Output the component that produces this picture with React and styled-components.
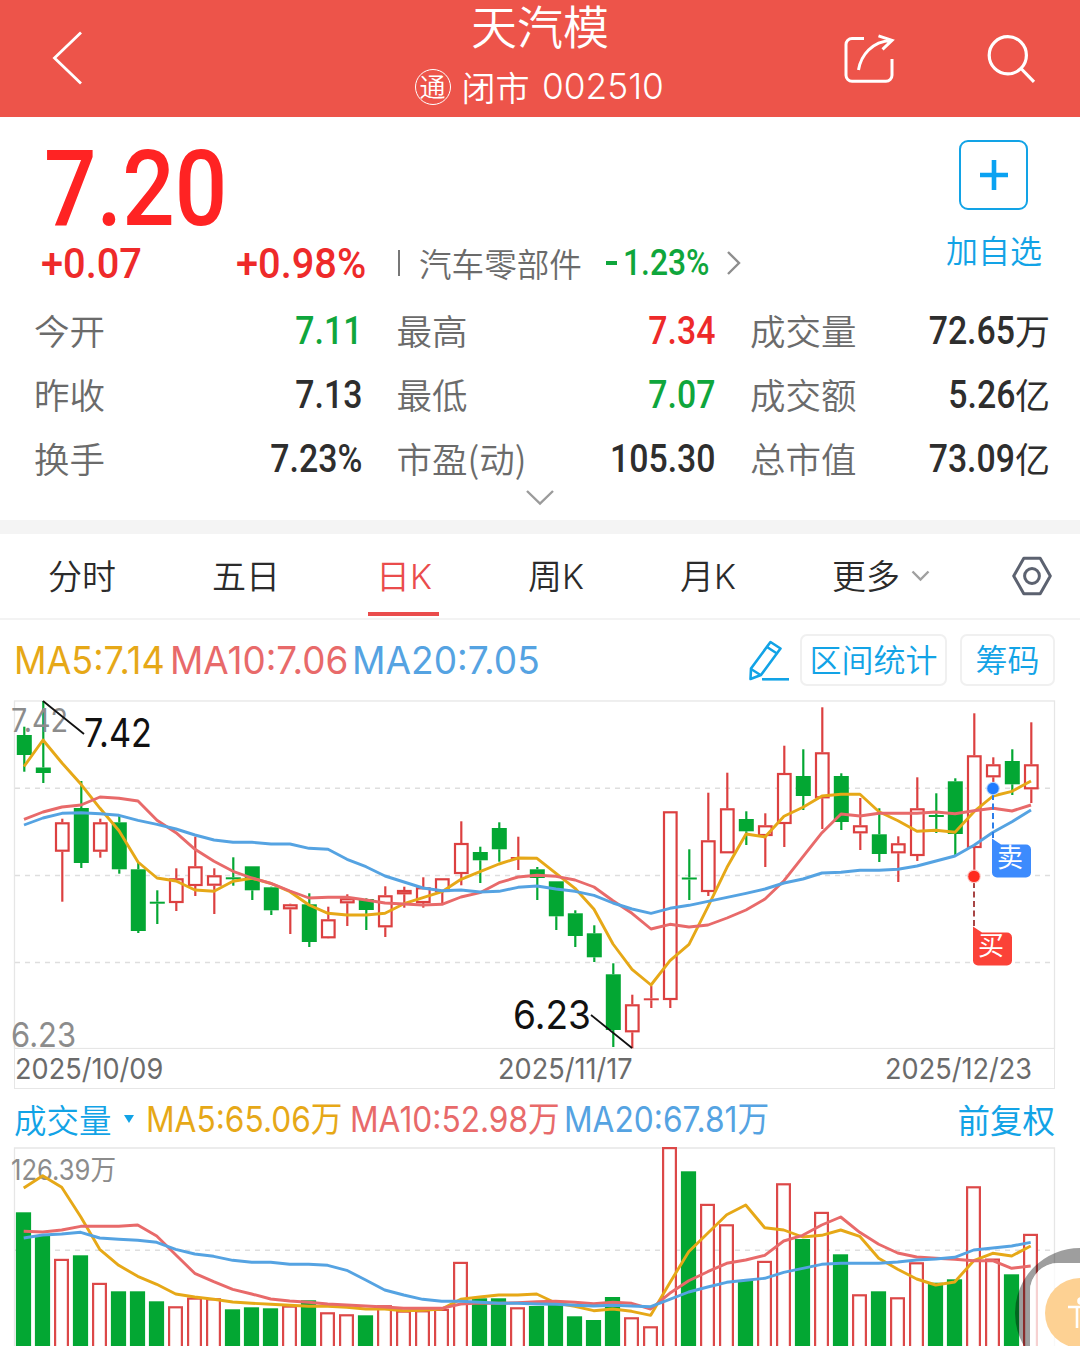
import React from 'react';
import styled, { createGlobalStyle } from 'styled-components';

const LATIN = "Inter, 'Noto Sans CJK SC', sans-serif";
const CJK = "'Noto Sans CJK SC', sans-serif";
const DIGIT = "Roboto, 'Noto Sans CJK SC', sans-serif";

const RED = '#ee2a2a';
const GREEN = '#0fa63c';
const BLUE = '#12a3e6';
const MA_COLORS = ['#e6a817', '#e86a6a', '#55a3e2'];

const STEP = 19;

// [up(1) / down(0), high, bodyTop, bodyBottom, low, volumeTop]
const candles = [
  [0, 726.7, 735, 755, 771.7, 1212.3],
  [0, 701, 767.5, 773, 783, 1235.7],
  [1, 818.7, 822.3, 851.7, 901.7, 1259.3],
  [0, 781, 808, 863, 868, 1255.3],
  [1, 818.7, 822.3, 851.7, 857.7, 1283.3],
  [0, 816, 822.3, 869.3, 873.7, 1291.3],
  [0, 863, 869.3, 931, 933, 1291.3],
  [0, 890.3, 901.7, 903.7, 924, 1301.3],
  [1, 868.3, 878.3, 903, 911, 1306.7],
  [1, 836.7, 866.3, 886, 896, 1298],
  [1, 868.3, 875.3, 885.7, 914, 1298.7],
  [0, 857.3, 877.3, 879.3, 885.7, 1309.3],
  [0, 866.3, 866.3, 890.3, 900, 1307.3],
  [0, 886.7, 887.3, 910.3, 915, 1308.3],
  [1, 903.7, 904.3, 909.3, 934, 1306],
  [0, 893.3, 904.3, 942, 947, 1300.3],
  [1, 906.7, 919.3, 938.3, 938.5, 1312.7],
  [1, 894.3, 898.3, 903.3, 926, 1314.7],
  [0, 898.3, 899, 910, 930, 1315.3],
  [1, 886.3, 895.3, 927.3, 937, 1305.7],
  [1, 886.7, 890, 894.3, 907.7, 1311],
  [1, 877.3, 887.3, 903, 907.7, 1310.7],
  [1, 878.3, 878.3, 892, 904.7, 1309.3],
  [1, 821.3, 843, 874, 885.3, 1262.3],
  [0, 846.7, 852, 860.3, 883, 1298.3],
  [0, 822.3, 828, 849.3, 861.7, 1298.3],
  [1, 836.7, 857, 859, 870, 1307.7],
  [0, 867, 869.3, 878, 900, 1306],
  [0, 881.3, 881.3, 916.3, 930, 1305],
  [0, 910.3, 913.3, 936, 947, 1316.3],
  [0, 925.3, 933.3, 957.3, 962, 1320],
  [0, 963.3, 974.3, 1030, 1047, 1297],
  [1, 994.7, 1004.3, 1032.3, 1048.3, 1317.7],
  [1, 986, 998.3, 1000.3, 1008, 1326.7],
  [1, 811.3, 811.3, 1000, 1008, 1147.5],
  [0, 849.3, 877.5, 879.5, 900, 1171.3],
  [1, 792.7, 840.3, 892, 896, 1204.3],
  [1, 772.7, 808.3, 853.3, 853.3, 1224.7],
  [0, 811.3, 819, 831.3, 845, 1280],
  [1, 813.3, 825.3, 836, 867, 1261.3],
  [1, 745.7, 773, 824, 847, 1183.7],
  [0, 749.3, 776, 796, 810, 1239],
  [1, 707.3, 752.3, 798.3, 829, 1212.3],
  [0, 773.3, 776, 822, 830, 1254.3],
  [1, 798, 825.3, 833.3, 850, 1294.7],
  [0, 808.3, 834.3, 854, 862, 1291.3],
  [1, 836.3, 843.3, 853.3, 882, 1297.7],
  [1, 777.3, 808.3, 856, 861, 1262.7],
  [0, 793.3, 815, 817, 833, 1282.7],
  [0, 778.3, 781.3, 834, 855, 1279.3],
  [1, 713.3, 755.3, 848, 873, 1186.7],
  [1, 757.3, 764.3, 777.3, 785, 1259],
  [0, 749.3, 761, 784.3, 795, 1274.3],
  [1, 722.3, 764.3, 789.3, 803, 1234.3],
];

const priceMA = [
  [766.5, 740, 763, 784.3, 808.3, 830.7, 862, 878, 881, 890, 891.3, 881.3, 878.3, 883.5, 891.7, 905, 913.3, 915,
    915, 913.3, 903.7, 897.7, 891.7, 879.3, 871.7, 864, 858, 858.3, 873.3, 888.3, 909.3, 944, 969.3, 985, 960.7,
    944.3, 906.7, 867.3, 834, 837, 816.3, 807.3, 796, 794.3, 794.3, 811.7, 820.7, 831.3, 830.3, 832.3, 811.7, 796,
    791.3, 781],
  [819.3, 812, 807, 805, 797, 798.3, 801, 820.3, 832.7, 849.3, 861.3, 871.3, 878, 883.3, 891, 898, 897.3, 897.3,
    900, 903, 904, 905, 904.3, 897, 892.7, 882.7, 877, 875.3, 876.3, 880, 887, 900.7, 913.3, 929, 924.3, 927, 925,
    918, 910, 899, 880.7, 856.7, 832.7, 814, 816, 813.3, 813.3, 813.3, 812, 813.7, 810.7, 808.3, 811, 805],
  [825, 818, 813.3, 812.7, 813.7, 815.3, 820.3, 824.3, 829, 835, 840, 842.3, 842.3, 844, 844, 848.3, 849.3, 859.3,
    866.7, 876, 882, 888, 890.7, 890, 892, 891.3, 887.3, 886, 889, 891.3, 895.3, 903, 909, 913.3, 908.3, 905.3,
    901.3, 897.3, 893.3, 889, 883, 879, 873, 872.3, 870.3, 870.3, 869.3, 866, 861, 856, 845.3, 832.3, 821.7, 810],
];

const volumeMA = [
  [1188, 1175.7, 1187.3, 1216.7, 1249.3, 1265.3, 1276.3, 1284.3, 1294, 1297, 1299.3, 1302, 1303.3, 1304.3, 1305.3,
    1306.3, 1306.3, 1307.3, 1309, 1309, 1310.7, 1310.3, 1309, 1299.3, 1297, 1295, 1295, 1294, 1303, 1306.3, 1310.7,
    1309, 1311.3, 1315.3, 1283, 1251.7, 1233.3, 1214.7, 1205, 1227.7, 1230, 1237, 1235.3, 1230, 1236.3, 1258.3,
    1269.3, 1279, 1285, 1282, 1260.7, 1253.3, 1256, 1246],
  [1231.3, 1232, 1230, 1226.3, 1226.3, 1226.3, 1225, 1236, 1254.7, 1273.3, 1281.7, 1289.3, 1294, 1299, 1301, 1302.3,
    1304, 1305, 1306, 1307, 1308.3, 1308.3, 1308.3, 1304, 1303, 1303.3, 1302.7, 1301.7, 1301.3, 1302.3, 1303.7,
    1302.3, 1303.3, 1309, 1293.3, 1280.7, 1271.7, 1263.3, 1260, 1255.3, 1241, 1235.3, 1225, 1217, 1232.3, 1244.3,
    1253, 1257, 1258.3, 1259.3, 1260.7, 1260.7, 1268.3, 1266],
  [1238, 1235, 1234, 1232.3, 1238, 1239.3, 1240.3, 1242.3, 1249.3, 1254, 1256.3, 1260.3, 1262.3, 1262.3, 1264.3,
    1264.3, 1265.3, 1270.3, 1280, 1290, 1295, 1299.3, 1301.3, 1301.3, 1302.3, 1303.3, 1303.3, 1304, 1304.3, 1305.3,
    1306, 1305.3, 1306, 1306.7, 1299.3, 1292, 1287, 1282.3, 1280.3, 1278.3, 1272.3, 1268.3, 1264.3, 1263.3, 1263.3,
    1263.3, 1262, 1260, 1259, 1257.3, 1250, 1248, 1246, 1242.3],
];

const stats = [
  ['今开', '7.11', '', GREEN],
  ['最高', '7.34', '', RED],
  ['成交量', '72.65', '万'],
  ['昨收', '7.13', ''],
  ['最低', '7.07', '', GREEN],
  ['成交额', '5.26', '亿'],
  ['换手', '7.23%', ''],
  ['市盈(动)', '105.30', ''],
  ['总市值', '73.09', '亿'],
];

const tabs = ['分时', '五日', '日K', '周K', '月K', '更多'];

const linePoints = (values, x0) => values.map((y, i) => `${x0 + i * STEP},${y}`).join(' ');

const MALines = ({ series, x0 }) =>
  series.map((values, i) => (
    <polyline
      key={MA_COLORS[i]}
      points={linePoints(values, x0)}
      fill="none"
      stroke={MA_COLORS[i]}
      strokeWidth="2.9"
      strokeLinejoin="round"
    />
  ));

const Candle = ({ x, data }) => {
  const [up, high, top, bottom, low] = data;
  const color = up ? '#dc4040' : '#03a733';
  const flat = bottom - top < 3;
  return (
    <g stroke={color} strokeWidth="2.2">
      <line x1={x} x2={x} y1={high} y2={top} />
      <line x1={x} x2={x} y1={bottom} y2={low} />
      {up && !flat ? (
        <rect x={x - 6.3} y={top + 1} width="12.6" height={bottom - top - 2} fill="#fff" />
      ) : (
        <rect x={x - 7.5} y={top} width="15" height={bottom - top} fill={color} stroke="none" />
      )}
    </g>
  );
};

const TradeTag = ({ x, y, color, children }) => (
  <g>
    <path
      d={`M${x} ${y}l9 6h25a5 5 0 0 1 5 5v23a5 5 0 0 1 -5 5h-29a5 5 0 0 1 -5 -5z`}
      fill={color}
    />
    <TagText x={x + 18} y={y + 28.5}>
      {children}
    </TagText>
  </g>
);

const PriceChart = () => (
  <ChartSvg width="1080" height="349" viewBox="0 700 1080 349">
    <rect x="14.5" y="701" width="1040" height="347.5" fill="none" stroke="#e6e6e6" strokeWidth="1.3" />
    {[788.3, 875.4, 962.4].map(y => (
      <line key={y} x1="15" x2="1054" y1={y} y2={y} stroke="#dedede" strokeWidth="1.5" strokeDasharray="5 5" />
    ))}
    {candles.map((c, i) => <Candle key={i} x={24.3 + i * STEP} data={c} />)}
    <AxisText x="11" y="732" fontSize="32" textLength="57" lengthAdjust="spacingAndGlyphs">7.42</AxisText>
    <AxisText x="11" y="1047" fontSize="34" textLength="65" lengthAdjust="spacingAndGlyphs">6.23</AxisText>
    <MALines series={priceMA} x0={24} />

    <g stroke="#111" strokeWidth="1.8">
      <line x1="43" y1="701" x2="84" y2="734" />
      <line x1="591" y1="1015" x2="632" y2="1048" />
    </g>
    <MarkText x="84" y="747" textLength="68" lengthAdjust="spacingAndGlyphs">7.42</MarkText>
    <MarkText x="513" y="1029" textLength="78" lengthAdjust="spacingAndGlyphs">6.23</MarkText>

    <line x1="993" x2="993" y1="794" y2="838" stroke="#2b7de9" strokeWidth="2" strokeDasharray="6 3.5" />
    <circle cx="993" cy="788.5" r="6.8" fill="#b9d5fb" />
    <circle cx="993" cy="788.5" r="5.7" fill="#1f7bff" />
    <TradeTag x={992} y={838.5} color="#3d8bfd">卖</TradeTag>
    <line x1="974" x2="974" y1="882" y2="927" stroke="#a84545" strokeWidth="2" strokeDasharray="6 3.5" />
    <circle cx="974" cy="876.4" r="6.8" fill="#fcc3bf" />
    <circle cx="974" cy="876.4" r="5.7" fill="#ff2a1f" />
    <TradeTag x={973} y={926.5} color="#fb4238">买</TradeTag>
  </ChartSvg>
);

const VolumeChart = () => (
  <ChartSvg width="1080" height="199" viewBox="0 1147 1080 199">
    <path d="M14.5 1346V1148H1054.5V1346" fill="none" stroke="#e6e6e6" strokeWidth="1.3" />
    <line x1="15" x2="1054" y1="1250.3" y2="1250.3" stroke="#dedede" strokeWidth="1.5" strokeDasharray="5 5" />
    {candles.map((c, i) => {
      const x = 23.5 + i * STEP;
      return c[0] ? (
        <rect key={i} x={x - 6.4} y={c[5] + 0.6} width="12.8" height="230" fill="#fff" stroke="#dc4848" strokeWidth="2.2" />
      ) : (
        <rect key={i} x={x - 7.6} y={c[5]} width="15.2" height="230" fill="#03a733" />
      );
    })}
    <AxisText x="11" y="1180" fontSize="28" textLength="105" lengthAdjust="spacingAndGlyphs">126.39万</AxisText>
    <MALines series={volumeMA} x0={23.7} />
  </ChartSvg>
);

const App = () => (
  <Screen>
    <GlobalStyle />
    <Header>
      <svg width="32" height="56" viewBox="52 30 32 56">
        <path d="M81 31.5L54.5 57L81 82.5" fill="none" stroke="#fff" strokeWidth="2.8" />
      </svg>
      <HeaderTitle>
        <h1>天汽模</h1>
        <SubTitle>
          <Badge>通</Badge>
          <span>闭市</span>
          <Code>002510</Code>
        </SubTitle>
      </HeaderTitle>
      <HeaderActions>
        <svg width="52" height="52" viewBox="843 32 52 52" fill="none" stroke="#fff" strokeWidth="3">
          <path d="M864 37.5H852a6 6 0 0 0 -6 6V74.3a6 6 0 0 0 6 6H886a6 6 0 0 0 6 -6V58" />
          <path d="M858.5 69C861 54 872 40.5 891 39.5M878.5 34.8L892 39.3L882.5 48.3" />
        </svg>
        <svg width="52" height="52" viewBox="985 32 52 52" fill="none" stroke="#fff" strokeWidth="3.2">
          <circle cx="1007.8" cy="54.3" r="18.6" />
          <path d="M1021 67.5L1034 80.8" />
        </svg>
      </HeaderActions>
    </Header>

    <Quote>
      <QuoteTop>
        <div>
          <BigPrice>7.20</BigPrice>
          <ChangeRow>
            <Change $width={195}>+0.07</Change>
            <Change $width={162}>+0.98%</Change>
            <Divider />
            <Industry>汽车零部件</Industry>
            <IndustryChange><i /><b>1.23%</b></IndustryChange>
            <svg width="16" height="26" viewBox="0 0 16 26">
              <path d="M2 2L13 13L2 24" fill="none" stroke="#8e8e8e" strokeWidth="2.4" />
            </svg>
          </ChangeRow>
        </div>
        <AddFavorite>
          <AddBox>
            <svg width="30" height="30" viewBox="0 0 30 30">
              <path d="M15 0V30M1 15H29" stroke="#0aa2f2" strokeWidth="4.6" />
            </svg>
          </AddBox>
          <span>加自选</span>
        </AddFavorite>
      </QuoteTop>
      <StatGrid>
        {stats.map(([label, value, unit, color]) => (
          <Stat key={label}>
            <StatLabel>{label}</StatLabel>
            <StatValue $color={color}>
              <b>{value}</b>
              {unit}
            </StatValue>
          </Stat>
        ))}
      </StatGrid>
      <Expand>
        <svg width="30" height="17" viewBox="0 0 30 17">
          <path d="M2 2L15 14.5L28 2" fill="none" stroke="#9b9b9b" strokeWidth="2.4" />
        </svg>
      </Expand>
    </Quote>

    <Tabs>
      {tabs.map(tab => (
        <Tab key={tab} $active={tab === '日K'}>
          {tab}
        </Tab>
      ))}
      <svg width="19" height="12" viewBox="0 0 19 12">
        <path d="M1.5 1.5L9.5 9.5L17.5 1.5" fill="none" stroke="#a0a0a0" strokeWidth="2.4" />
      </svg>
      <Settings width="42" height="42" viewBox="0 0 42 42" fill="none" stroke="#5c6270" strokeWidth="3">
        <path d="M12.8 3.3H29.2L39.3 21L29.2 38.7H12.8L2.7 21Z" strokeLinejoin="round" />
        <circle cx="21" cy="21" r="7.4" />
      </Settings>
    </Tabs>

    <Indicators>
      <MAText $color={MA_COLORS[0]} $width={156} $stretch={0.935}>MA5:7.14</MAText>
      <MAText $color={MA_COLORS[1]} $width={182} $stretch={0.957}>MA10:7.06</MAText>
      <MAText $color={MA_COLORS[2]} $width={187} $stretch={0.963}>MA20:7.05</MAText>
      <Tools>
        <svg width="42" height="42" viewBox="749 640 42 42" fill="none" stroke={BLUE} strokeWidth="2.6" strokeLinejoin="round">
          <path d="M771.5 643L781.5 649.5L762 676L751.5 680L752 669.5Z" />
          <path d="M768 648L778 654.5M752 670L761.5 676" />
          <path d="M763 680.3H790" />
        </svg>
        <ToolButton $width={147}>区间统计</ToolButton>
        <ToolButton $width={95}>筹码</ToolButton>
      </Tools>
    </Indicators>

    <PriceChart />
    <DateStrip>
      <span>2025/10/09</span>
      <span>2025/11/17</span>
      <span>2025/12/23</span>
    </DateStrip>

    <VolumeHead>
      <VolumeName>成交量</VolumeName>
      <Caret />
      <VolumeMA $color={MA_COLORS[0]} $width={204}>MA5:65.06万</VolumeMA>
      <VolumeMA $color={MA_COLORS[1]} $width={214}>MA10:52.98万</VolumeMA>
      <VolumeMA $color={MA_COLORS[2]} $width={210}>MA20:67.81万</VolumeMA>
      <Adjust>前复权</Adjust>
    </VolumeHead>
    <VolumeChart />

    <FloatBall>
      <svg width="65" height="98" viewBox="1015 1248 65 98">
        <path
          d="M1080 1248a65 65 0 0 0 0 130z M1080 1263h-22a28 28 0 0 0 -28 28v55h50z"
          fill="#000"
          fillOpacity=".38"
          fillRule="evenodd"
        />
        <path d="M1080 1263h-22a28 28 0 0 0 -28 28v55h50z" fill="#fff" fillOpacity=".75" />
        <circle cx="1080" cy="1313" r="35" fill="#fdd193" />
        <g stroke="#fff" strokeWidth="2.6" fill="none">
          <path d="M1068 1307H1080M1077 1307V1328" />
          <circle cx="1081" cy="1301" r="2.5" fill="#fff" />
        </g>
      </svg>
    </FloatBall>
  </Screen>
);

export default App;

const GlobalStyle = createGlobalStyle`
  body {
    margin: 0;
    background: #fff;
  }
  * {
    box-sizing: border-box;
  }
`;

const Screen = styled.div`
  position: relative;
  width: 1080px;
  height: 1346px;
  overflow: hidden;
  background: #fff;
  color: #333;
  font-family: ${CJK};
  font-weight: 350;
  white-space: nowrap;
  svg {
    display: block;
    flex: none;
  }
`;

const Header = styled.header`
  display: grid;
  grid-template-columns: 360px 1fr 360px;
  align-items: center;
  height: 117px;
  background: #ed544a;
  color: #fff;
  > svg {
    margin-left: 52px;
  }
`;

const HeaderTitle = styled.div`
  display: flex;
  flex-direction: column;
  align-items: center;
  height: 117px;
  h1 {
    margin: 0;
    height: 56px;
    font-size: 46px;
    font-weight: 350;
    line-height: 48px;
  }
`;

const SubTitle = styled.div`
  display: flex;
  align-items: center;
  height: 61px;
  margin-right: 3px;
  font-size: 34px;
  line-height: 61px;
`;

const Badge = styled.span`
  width: 36px;
  height: 36px;
  margin-right: 11px;
  border: 1.8px solid #fff;
  border-radius: 50%;
  font-size: 26px;
  line-height: 32px;
  text-align: center;
`;

const Code = styled.span`
  width: 121px;
  margin-left: 12px;
  font-family: ${LATIN};
  font-size: 36px;
  line-height: 63px;
  transform: scaleX(0.98);
  transform-origin: 0 0;
`;

const HeaderActions = styled.div`
  display: flex;
  justify-content: flex-end;
  gap: 90px;
  padding-right: 43px;
`;

const Quote = styled.section`
  height: 417px;
  border-bottom: 14px solid #f4f4f4;
`;

const QuoteTop = styled.div`
  display: flex;
  justify-content: space-between;
  height: 182px;
`;

const BigPrice = styled.div`
  height: 117px;
  padding: 30px 0 0 44px;
  color: #ff2323;
  font: 500 105px/86px ${DIGIT};
  transform: scaleX(0.88);
  transform-origin: 44px 0;
`;

const ChangeRow = styled.div`
  display: flex;
  align-items: center;
  height: 58px;
  padding-left: 41px;
`;

const Change = styled.span`
  width: ${({ $width }) => $width}px;
  color: ${RED};
  font: 500 43px/56px ${DIGIT};
  transform: scaleX(0.925);
  transform-origin: 0 0;
`;

const Divider = styled.i`
  width: 2px;
  height: 26px;
  margin: 0 19px 0 0;
  background: #777;
`;

const Industry = styled.span`
  width: 187px;
  color: #6b6b6b;
  font-size: 32.6px;
  line-height: 56px;
`;

const IndustryChange = styled.span`
  display: flex;
  align-items: center;
  width: 120px;
  color: ${GREEN};
  font: 500 37px/60px ${DIGIT};
  i {
    width: 11px;
    height: 3.5px;
    margin-right: 6px;
    background: ${GREEN};
  }
  b {
    font-weight: 500;
    transform: scaleX(0.86);
    transform-origin: 0 0;
  }
`;

const AddFavorite = styled.div`
  display: flex;
  flex-direction: column;
  align-items: center;
  width: 173px;
  padding-top: 23px;
  color: ${BLUE};
  font-size: 32px;
  line-height: 48px;
  span {
    margin: 15px -1px 0 0;
  }
`;

const AddBox = styled.div`
  display: flex;
  align-items: center;
  justify-content: center;
  width: 69px;
  height: 70px;
  border: 2.5px solid ${BLUE};
  border-radius: 9px;
`;

const StatGrid = styled.div`
  display: grid;
  grid-template-columns: 328px 319px 300px;
  justify-content: space-between;
  padding: 0 30px 0 34px;
`;

const Stat = styled.div`
  display: flex;
  justify-content: space-between;
  height: 64px;
  line-height: 62px;
`;

const StatLabel = styled.span`
  color: #6b6b6b;
  font-size: 35.5px;
`;

const StatValue = styled.span`
  display: flex;
  color: ${({ $color }) => $color || '#2e2e2e'};
  font-size: 35px;
  font-weight: 400;
  b {
    font-family: ${DIGIT};
    font-size: 38px;
    font-weight: 500;
    line-height: 65px;
    transform: scaleX(0.89);
    transform-origin: 100% 0;
  }
`;

const Expand = styled.div`
  display: flex;
  justify-content: center;
  margin-top: -2px;
`;

const Tabs = styled.nav`
  display: flex;
  align-items: center;
  height: 86px;
  padding: 0 28px 0 48px;
  border-bottom: 2px solid #f3f3f3;
  gap: 96px;
  > svg:nth-last-child(2) {
    margin-left: -85px;
  }
`;

const Tab = styled.span`
  display: flex;
  position: relative;
  height: 84px;
  color: ${({ $active }) => ($active ? '#ea4c4c' : '#2b2b2b')};
  font-family: ${LATIN};
  font-size: 34px;
  line-height: 86px;
  &::after {
    content: '';
    display: ${({ $active }) => ($active ? 'block' : 'none')};
    position: absolute;
    right: -7px;
    bottom: 2px;
    left: -8px;
    height: 4px;
    background: #ea4c4c;
  }
`;

const Settings = styled.svg`
  margin-left: -15px;
`;

const Indicators = styled.div`
  display: flex;
  align-items: center;
  height: 80px;
  padding: 0 25px 0 14px;
`;

const MAText = styled.span`
  width: ${({ $width }) => $width}px;
  color: ${({ $color }) => $color};
  font: 400 38.5px/80px ${LATIN};
  transform: scaleX(${({ $stretch }) => $stretch});
  transform-origin: 0 0;
`;

const Tools = styled.div`
  display: flex;
  align-items: center;
  margin-left: auto;
  svg {
    margin-right: 10px;
  }
`;

const ToolButton = styled.span`
  width: ${({ $width }) => $width}px;
  height: 52px;
  margin-left: 13px;
  border: 2px solid #f0f0f0;
  border-radius: 7px;
  color: ${BLUE};
  font-size: 32px;
  line-height: 45px;
  text-align: center;
  svg + & {
    margin-left: 0;
  }
`;

const ChartSvg = styled.svg`
  overflow: hidden;
`;

const TagText = styled.text`
  fill: #fff;
  font-family: ${CJK};
  font-size: 26px;
  font-weight: 400;
  text-anchor: middle;
`;

const AxisText = styled.text`
  fill: #8c8c8c;
  font-family: ${LATIN};
  font-weight: 400;
`;

const MarkText = styled.text`
  fill: #111;
  font-family: ${LATIN};
  font-size: 40px;
  font-weight: 400;
`;

const DateStrip = styled.div`
  display: grid;
  grid-template-columns: 483px 387px auto;
  height: 40px;
  margin: 0 25px 0 14px;
  border: 1px solid #e6e6e6;
  border-top: 0;
  color: #6b6b6b;
  font: 400 29px/39px ${LATIN};
  span {
    transform: scaleX(0.935);
    transform-origin: 0 0;
  }
`;

const VolumeHead = styled.div`
  display: flex;
  align-items: center;
  height: 58px;
  padding: 1px 25px 0 14px;
`;

const VolumeName = styled.span`
  color: ${BLUE};
  font-size: 32.5px;
`;

const Caret = styled.i`
  margin: 0 12px 0 12px;
  border: 5px solid transparent;
  border-top: 8px solid ${BLUE};
  border-bottom: 0;
`;

const VolumeMA = styled.span`
  width: ${({ $width }) => $width}px;
  color: ${({ $color }) => $color};
  font: 400 35px/56px ${LATIN};
  transform: scaleX(0.905);
  transform-origin: 0 0;
`;

const Adjust = styled.span`
  margin-left: auto;
  color: ${BLUE};
  font-size: 32.5px;
  font-weight: 400;
`;

const FloatBall = styled.div`
  position: absolute;
  right: 0;
  bottom: 0;
`;
